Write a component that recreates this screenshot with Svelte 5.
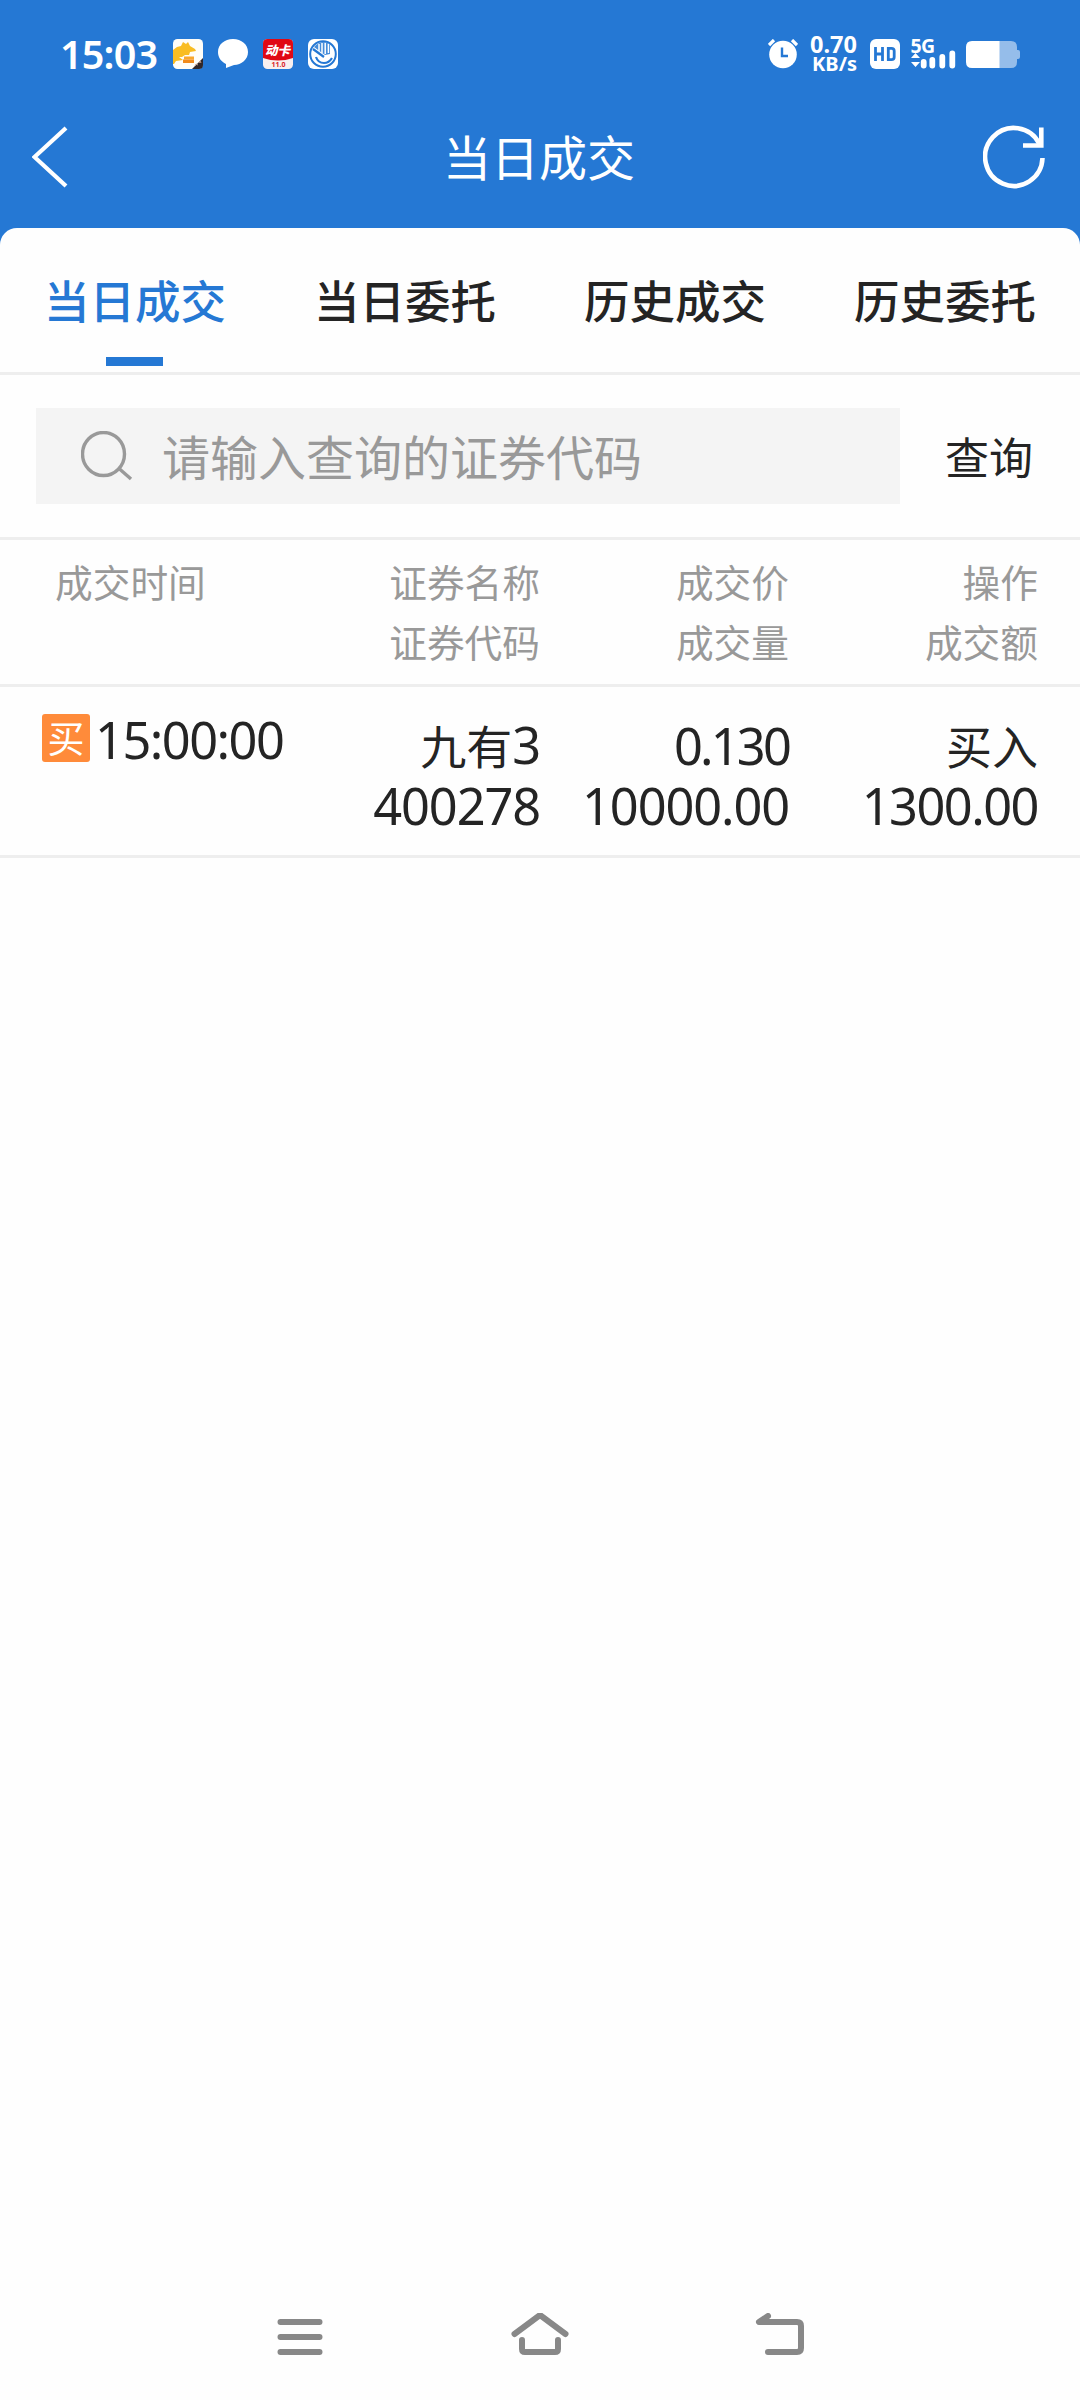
<script>
  const tabs = ['当日成交', '当日委托', '历史成交', '历史委托'];
  const columns = [
    ['成交时间'],
    ['证券名称', '证券代码'],
    ['成交价', '成交量'],
    ['操作', '成交额'],
  ];
  let active = $state(0);
</script>

<div class="screen">
  <header>
    <div class="status">
      <span class="clock">15:03</span>
      <svg class="app" viewBox="0 0 30 30">
        <rect width="30" height="30" rx="4.500" fill="#fffdf8" />
        <path d="M8 7l2-4 3 2 2-2 2 4 5 3 1 2-6 1-1 3h-4l-3 2H6l4 3-7 1-2 3H0V11l4-3z" fill="#f9bd22" />
        <path d="M11 17.500h10v3H11z" fill="#f9a72c" />
        <path d="M10 20.500h11V24H10z" fill="#f08a1c" />
        <path d="M30 19v7q0 4-4 4h-7z" fill="#30272a" />
        <path d="M22 27l1-2 2 1M26 24l1-2 1 2" fill="none" stroke="#c9a18e" stroke-width="1" />
      </svg>
      <svg class="app" viewBox="0 0 30 30">
        <path d="M15 0C23.500 0 30 5.500 30 13s-6.500 12.800-14 13L8 29V25C3 22.500 0 18.500 0 13 0 5.500 6.500 0 15 0z" fill="#fff" />
      </svg>
      <svg class="app" viewBox="0 0 30 30">
        <rect width="30" height="30" rx="4.500" fill="#f8efef" />
        <path d="M0 19V4.500Q0 0 4.500 0h21Q30 0 30 4.500V19q-15 5-30 0z" fill="#e00814" />
        <text class="card-name" x="14.500" y="16" text-anchor="middle">动卡</text>
        <text class="card-date" x="15.500" y="28" text-anchor="middle">11.0</text>
      </svg>
      <svg class="app" viewBox="0 0 30 30">
        <rect width="30" height="30" rx="6" fill="#fff" />
        <circle cx="15" cy="15" r="12.800" fill="none" stroke="#2578d4" stroke-width="2" />
        <path d="M6 8Q10 3.500 15 3q4 0 7 2.500L22 15l-5 1z" fill="#2578d4" opacity=".85" />
        <path d="M11 5v7M14 4v10M17.200 4v11M20.400 5v9" stroke="#fff" stroke-width="1.500" />
        <path d="M5 10l11 8M8 18q2 6 8 6 5 0 8-5" fill="none" stroke="#2578d4" stroke-width="2.200" />
      </svg>
      <span class="spacer"></span>
      <svg class="alarm" viewBox="0 0 30 30">
        <circle cx="15" cy="15.500" r="13.800" fill="#fff" />
        <path d="M1 6l5-5M24 1l5 5" stroke="#fff" stroke-width="3.200" />
        <path d="M14 8.500V17h6" fill="none" stroke="#2578d4" stroke-width="2.400" />
      </svg>
      <div class="speed"><b>0.70</b><b class="unit">KB/s</b></div>
      <svg class="hd" viewBox="0 0 30 30">
        <rect width="30" height="30" rx="6" fill="#fff" />
        <path d="M5.500 8v14M12.500 8v14M5.500 15h7M18.300 9.300h3.200q2.700 0 2.700 2.700v6q0 2.700-2.700 2.700h-3.200z" fill="none" stroke="#2578d4" stroke-width="2.800" />
      </svg>
      <svg class="signal" viewBox="0 0 45 32">
        <text class="fiveg" x="-.5" y="15">5G</text>
        <path d="M0 20l4.500-5L9 20zM0 24h9l-4.500 5z" fill="#fff" />
        <path d="M12.700 24v3.500M21.300 22v5.500M31.300 19v8.500M41.300 15.500v12" stroke="#fff" stroke-width="5.800" stroke-linecap="round" />
      </svg>
      <svg class="battery" viewBox="0 0 54 27">
        <path d="M33 0h12q6 0 6 6v3h1q2 0 2 2v5q0 2-2 2h-1v3q0 6-6 6H33z" fill="#95bdea" />
        <path d="M33.500 0H6Q0 0 0 6v15q0 6 6 6h27.500z" fill="#fff" />
      </svg>
    </div>
    <div class="titlebar">
      <svg class="back" viewBox="0 0 36 62"><path d="M34 2L2.500 31 34 60" fill="none" stroke="#fff" stroke-width="4.200" /></svg>
      <h1>当日成交</h1>
      <svg class="refresh" viewBox="0 0 62 64">
        <path d="M59.500 33A28.700 29 0 1 1 56.500 19" fill="none" stroke="#fff" stroke-width="4.600" />
        <path d="M58.300 2.500V20.500H40" fill="none" stroke="#fff" stroke-width="4.600" />
      </svg>
    </div>
  </header>

  <main>
    <nav class="tabs">
      {#each tabs as tab, i}
        <button class:active={active === i} onclick={() => (active = i)}>{tab}</button>
      {/each}
    </nav>

    <section class="search">
      <div class="field">
        <svg viewBox="0 0 52 50"><ellipse cx="22.500" cy="23" rx="21" ry="21.500" /><path d="M38 37.500L50 48" /></svg>
        <span>请输入查询的证券代码</span>
      </div>
      <span class="query">查询</span>
    </section>

    <section class="grid head">
      {#each columns as lines}
        <div>{#each lines as line}<p>{line}</p>{/each}</div>
      {/each}
    </section>

    <section class="grid row">
      <div class="time"><span class="badge">买</span><span class="num clocked">15:00:00</span></div>
      <div><p class="name">九有<span class="num">3</span></p><p class="num">400278</p></div>
      <div><p class="num tight">0.130</p><p class="num">10000.00</p></div>
      <div><p class="name">买入</p><p class="num amount">1300.00</p></div>
    </section>
  </main>

  <footer>
    <svg viewBox="0 0 60 48"><path d="M10.500 9h39M10.500 24h39M10.500 39h39" /></svg>
    <svg viewBox="0 0 60 48"><path d="M4.500 21L30 2 55.500 21M12 27v9q0 3 3 3h30q3 0 3-3v-9" /></svg>
    <svg viewBox="0 0 60 48"><path d="M18 3L9 9h38q4 0 4 4v22q0 4-4 4H18" /></svg>
  </footer>
</div>

<style>
  :global(body) { margin: 0; background: #fefefe; }
  .screen {
    width: 1080px;
    height: 2400px;
    display: flex;
    flex-direction: column;
    background: #2578d4;
    color: #242424;
    font-family: 'Noto Sans CJK SC', sans-serif;
  }
  header { height: 228px; color: #fff; }
  svg { display: block; flex: none; }
  .status {
    height: 108px;
    box-sizing: border-box;
    padding: 0 60px;
    display: flex;
    align-items: center;
    font-family: 'Noto Sans', sans-serif;
  }
  .clock { width: 98px; font-size: 39.500px; line-height: 40px; font-weight: 600; letter-spacing: -.8px; margin-right: 15px; }
  .app { width: 30px; height: 30px; margin-right: 15px; }
  .card-name { font: italic 900 12.500px 'Noto Sans CJK SC', sans-serif; fill: #fff; }
  .card-date { font: 700 7px 'Noto Sans', sans-serif; fill: #d9242c; }
  .spacer { flex: 1; }
  .alarm { width: 30px; height: 30px; margin-right: 11px; }
  .speed { width: 48px; display: flex; flex-direction: column; align-items: flex-end; margin-right: 13px; }
  .speed b { font-size: 23.500px; line-height: 19px; font-weight: 700; }
  .speed .unit { font-size: 20px; font-weight: 700; }
  .hd { width: 30px; height: 30px; margin-right: 11px; }
  .signal { width: 45px; height: 32px; margin-right: 10px; overflow: visible; }
  .fiveg { font: 700 19.500px 'Noto Sans', sans-serif; letter-spacing: -.6px; fill: #fff; }
  .battery { width: 54px; height: 27px; }

  .titlebar {
    height: 98px;
    padding: 0 35px 0 32px;
    display: flex;
    align-items: center;
    justify-content: space-between;
  }
  .back { width: 36px; height: 62px; }
  .refresh { width: 62px; height: 64px; }
  h1 { margin: 0 0 5px 27px; font-size: 48px; line-height: 60px; font-weight: 400; }

  main { flex: 1; background: #fefefe; border-radius: 17px 17px 0 0; overflow: hidden; }
  .tabs { height: 144px; display: grid; grid-template-columns: repeat(4, 1fr); border-bottom: 3px solid #eee; }
  button {
    border: 0;
    background: none;
    padding: 41px 0 0;
    display: flex;
    flex-direction: column;
    align-items: center;
    color: #242424;
    font: 500 45.500px/60px 'Noto Sans CJK SC', sans-serif;
  }
  .active { color: #2578d4; }
  .active::after { content: ''; width: 57px; height: 9px; margin: 28px 2px 0 0; background: #2578d4; }

  .search { height: 162px; padding: 0 47px 0 36px; display: flex; align-items: center; justify-content: space-between; border-bottom: 3px solid #eee; }
  .field { width: 864px; height: 96px; display: flex; align-items: center; background: #f4f4f4; color: #999; font-size: 48px; }
  .field span { margin-bottom: 3px; }
  .field svg { width: 52px; height: 50px; margin: 0 29px 0 45px; fill: none; stroke: #999; stroke-width: 3.400; }
  .query { font-size: 44px; }

  .grid { display: grid; grid-template-columns: 300px 240px 249px 249px; border-bottom: 3px solid #eee; }
  .grid > div { text-align: right; }
  .grid > div:first-child { text-align: left; }
  p { margin: 0; line-height: 60px; white-space: nowrap; }
  .head { height: 133px; padding-top: 11px; color: #999; font-size: 37.700px; }
  .head > div:first-child { padding-left: 55px; }
  .row { height: 139px; padding-top: 29px; font-size: 46px; }
  .num { font-family: 'Noto Sans', sans-serif; font-size: 50.500px; letter-spacing: -1.100px; }
  .name { line-height: 56px; padding-bottom: 4px; height: 56px; }
  .tight { letter-spacing: -2.800px; }
  .amount { letter-spacing: -1.500px; }
  .time { display: flex; align-items: flex-start; padding-left: 42px; }
  .badge {
    width: 48px;
    height: 48px;
    margin: -2px 5px 0 0;
    border-radius: 3px;
    background: #ff8b3a;
    color: #fff;
    font-size: 37px;
    line-height: 46px;
    text-align: center;
  }
  .clocked { line-height: 48px; letter-spacing: -1.500px; }

  footer { height: 127px; padding-top: 3px; background: #fefefe; display: flex; justify-content: center; gap: 180px; align-items: center; }
  footer svg { width: 60px; height: 48px; fill: none; stroke: #888; stroke-width: 6; stroke-linecap: round; stroke-linejoin: round; }
</style>
